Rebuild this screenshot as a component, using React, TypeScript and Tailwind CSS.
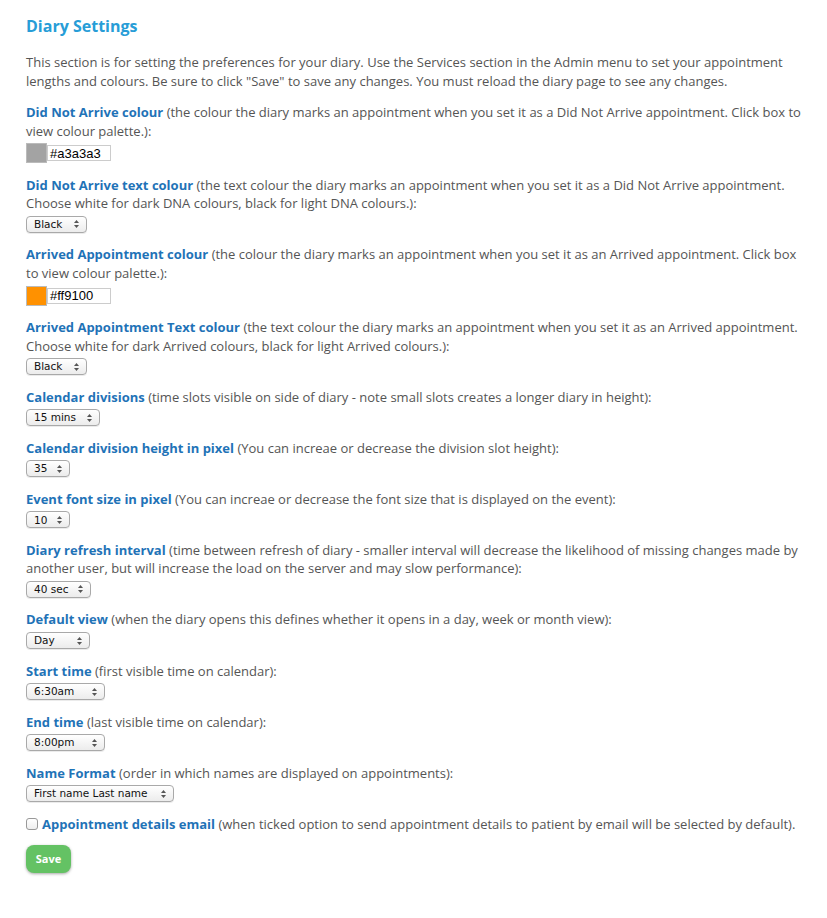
import type { ReactNode } from "react";

const LABEL_CLASS = "font-bold text-[#1f73b7]";

function Arrows() {
  return (
    <svg width="5" height="8" viewBox="0 0 5 8" className="shrink-0">
      <path d="M2.5 0 L5 3 L0 3 Z" fill="#555" />
      <path d="M2.5 8 L5 5 L0 5 Z" fill="#555" />
    </svg>
  );
}

function FakeSelect({ value, width }: { value: string; width: string }) {
  return (
    <div
      className={`mt-[3px] flex h-[17px] items-center justify-between rounded-[4px] border border-[#a9a9a9] bg-gradient-to-b from-white to-[#ececec] pl-[7px] pr-[7px] text-[10.5px] text-[#111] shadow-[0_1px_0_rgba(0,0,0,0.08)] ${width}`}
      style={{ fontFamily: '"DejaVu Sans", sans-serif' }}
    >
      <span>{value}</span>
      <Arrows />
    </div>
  );
}

function ColourInput({ colour, value }: { colour: string; value: string }) {
  return (
    <div className="mt-[3px] flex items-center">
      <div className="h-[20px] w-[21px] border border-[#bbb]" style={{ backgroundColor: colour }} />
      <div
        className="flex h-[16px] w-[64px] items-center border border-[#ccc] bg-white pl-[2px] text-[13px] leading-none text-black"
        style={{ fontFamily: '"Liberation Sans", Arial, sans-serif' }}
      >
        {value}
      </div>
    </div>
  );
}

function Field({
  label,
  help,
  children,
}: {
  label: string;
  help: string;
  children: ReactNode;
}) {
  return (
    <div className="mb-[12.5px]">
      <p>
        <span className={LABEL_CLASS}>{label}</span> {help}
      </p>
      {children}
    </div>
  );
}

export default function App() {
  return (
    <div
      className="min-h-[918px] bg-white px-[26px] pt-[15px] text-[13px] leading-[18.57px] text-[#555]"
      style={{ fontFamily: '"Open Sans", sans-serif' }}
    >
      <h1 className="text-[16px] font-bold leading-[22px] text-[#279dd7]">Diary Settings</h1>
      <p className="mb-[13px] mt-[16px]">
        This section is for setting the preferences for your diary. Use the Services section in the
        Admin menu to set your appointment lengths and colours. Be sure to click "Save" to save any
        changes. You must reload the diary page to see any changes.
      </p>

      <Field
        label="Did Not Arrive colour"
        help="(the colour the diary marks an appointment when you set it as a Did Not Arrive appointment. Click box to view colour palette.):"
      >
        <ColourInput colour="#a3a3a3" value="#a3a3a3" />
      </Field>

      <Field
        label="Did Not Arrive text colour"
        help="(the text colour the diary marks an appointment when you set it as a Did Not Arrive appointment. Choose white for dark DNA colours, black for light DNA colours.):"
      >
        <FakeSelect value="Black" width="w-[61px]" />
      </Field>

      <Field
        label="Arrived Appointment colour"
        help="(the colour the diary marks an appointment when you set it as an Arrived appointment. Click box to view colour palette.):"
      >
        <ColourInput colour="#ff9100" value="#ff9100" />
      </Field>

      <Field
        label="Arrived Appointment Text colour"
        help="(the text colour the diary marks an appointment when you set it as an Arrived appointment. Choose white for dark Arrived colours, black for light Arrived colours.):"
      >
        <FakeSelect value="Black" width="w-[61px]" />
      </Field>

      <Field
        label="Calendar divisions"
        help="(time slots visible on side of diary - note small slots creates a longer diary in height):"
      >
        <FakeSelect value="15 mins" width="w-[74px]" />
      </Field>

      <Field
        label="Calendar division height in pixel"
        help="(You can increae or decrease the division slot height):"
      >
        <FakeSelect value="35" width="w-[44px]" />
      </Field>

      <Field
        label="Event font size in pixel"
        help="(You can increae or decrease the font size that is displayed on the event):"
      >
        <FakeSelect value="10" width="w-[44px]" />
      </Field>

      <Field
        label="Diary refresh interval"
        help="(time between refresh of diary - smaller interval will decrease the likelihood of missing changes made by another user, but will increase the load on the server and may slow performance):"
      >
        <FakeSelect value="40 sec" width="w-[65px]" />
      </Field>

      <Field
        label="Default view"
        help="(when the diary opens this defines whether it opens in a day, week or month view):"
      >
        <FakeSelect value="Day" width="w-[64px]" />
      </Field>

      <Field label="Start time" help="(first visible time on calendar):">
        <FakeSelect value="6:30am" width="w-[79px]" />
      </Field>

      <Field label="End time" help="(last visible time on calendar):">
        <FakeSelect value="8:00pm" width="w-[79px]" />
      </Field>

      <Field label="Name Format" help="(order in which names are displayed on appointments):">
        <FakeSelect value="First name Last name" width="w-[148px]" />
      </Field>

      <div className="mb-[12px] flex items-center">
        <div className="mr-[4px] h-[12px] w-[12px] rounded-[3px] border border-[#999] bg-gradient-to-b from-white to-[#eee]" />
        <p>
          <span className={LABEL_CLASS}>Appointment details email</span> (when ticked option to
          send appointment details to patient by email will be selected by default).
        </p>
      </div>

      <button
        type="button"
        className="h-[28px] w-[45px] rounded-[8px] bg-[#64c264] text-[11px] font-bold text-white shadow-[0_1px_3px_rgba(0,0,0,0.35)]"
      >
        Save
      </button>
    </div>
  );
}
